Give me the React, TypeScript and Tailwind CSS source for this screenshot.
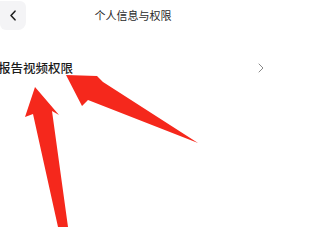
import React from "react";

const cjk = { fontFamily: '"Noto Sans CJK SC", "Noto Sans", sans-serif' };

export default function App() {
  return (
    <div className="relative h-[227px] w-[269px] overflow-hidden bg-white" style={cjk}>
      {/* header */}
      <div className="relative flex h-[30px] items-center">
        <button className="flex h-[29px] w-[26px] items-center justify-center rounded-br-lg rounded-bl-md rounded-tr-md bg-[#f4f4f6]">
          <svg width="8" height="11" viewBox="0 0 8 11" fill="none">
            <path d="M6 1.2L2 5.5L6 9.8" stroke="#1f1f1f" strokeWidth="1.6" strokeLinecap="round" strokeLinejoin="round" />
          </svg>
        </button>
        <div className="flex-1 pr-[29px] text-center text-[11px] leading-none text-[#2a2a2a]">个人信息与权限</div>
      </div>

      {/* row */}
      <div className="mt-[25px] flex h-[26px] items-center justify-between pr-[5px]">
        <span className="-ml-[2px] text-[12.5px] font-medium leading-none text-[#1c1c1c]">报告视频权限</span>
        <svg width="6" height="10" viewBox="0 0 6 10" fill="none">
          <path d="M1 1L5 5L1 9" stroke="#8a8a8a" strokeWidth="1" strokeLinecap="round" strokeLinejoin="round" />
        </svg>
      </div>

      {/* annotation arrows */}
      <svg className="pointer-events-none absolute left-0 top-0" width="269" height="227" viewBox="0 0 269 227">
        <polygon points="66,75 97,76 103,82 198,143 88,100 82,106" fill="#f5281c" />
        <polygon points="35,87 59,115 52,111 68,227 58,227 33,114 25,117" fill="#f5281c" />
      </svg>
    </div>
  );
}
